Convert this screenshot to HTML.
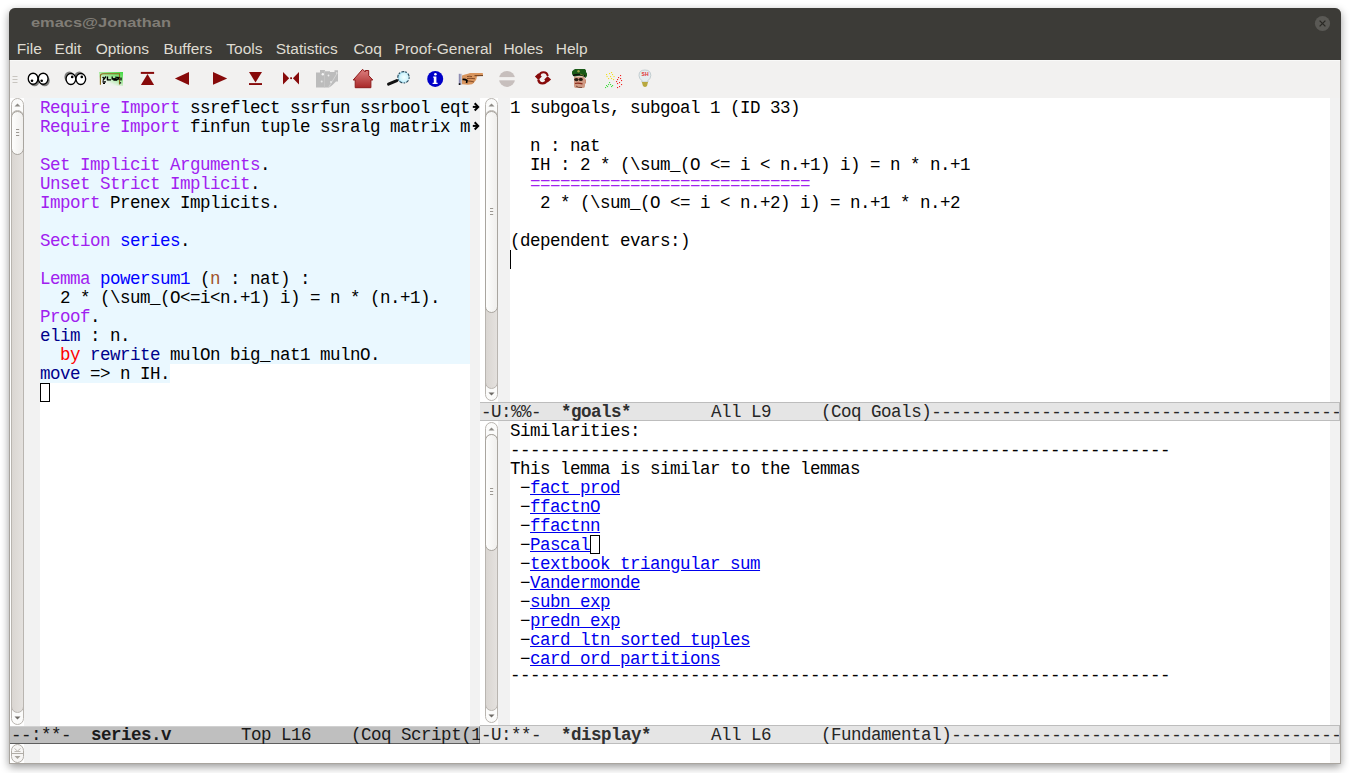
<!DOCTYPE html><html><head><meta charset="utf-8"><style>
*{margin:0;padding:0;box-sizing:border-box}
html,body{width:1350px;height:773px;overflow:hidden;background:#fff;position:relative}
.a{position:absolute}
.m{font-family:"Liberation Mono",monospace;font-size:17.5px;letter-spacing:-0.500px;line-height:19px;white-space:pre;color:#000}
.kw{color:#a020f0}
.fn{color:#0000ff}
.vr{color:#a0522d}
.tc{color:#00008b}
.rd{color:#ff0000}
.lk{color:#0000ee;text-decoration:underline;text-underline-offset:1px}
.b{font-weight:bold}
.dd{position:relative;top:1px}
.du .dd{top:-2px}
.sans{font-family:"Liberation Sans",sans-serif}
.sb{position:absolute;border:1px solid #aaa69f;border-radius:7px;background:linear-gradient(90deg,#dcd8d4,#e6e3e0)}
.th{position:absolute;border:1px solid #a9a59f;border-radius:7px;background:linear-gradient(90deg,#fdfdfc,#f0efed)}
</style></head><body><div class="a" style="left:9px;top:8px;width:1332px;height:756px;background:#a9a59f;border-radius:6px 6px 0 0;box-shadow:0 3px 9px rgba(0,0,0,.40)"></div>
<div class="a" style="left:9px;top:8px;width:1332px;height:52px;background:#3c3b37;border-radius:6px 6px 0 0"></div>
<div class="a sans b" style="left:31px;top:14px;font-size:13.5px;letter-spacing:0px;color:#807d76;line-height:18px;transform:scaleX(1.215);transform-origin:0 0">emacs@Jonathan</div>
<svg class="a" style="left:1314px;top:15px" width="17" height="17" viewBox="0 0 17 17"><circle cx="8.5" cy="8.5" r="7.6" fill="#5a5955"/><path d="M5.6 5.6L11.4 11.4M11.4 5.6L5.6 11.4" stroke="#2a2925" stroke-width="1.3"/></svg>
<div class="a sans" style="left:16.8px;top:40px;font-size:15.5px;color:#dfdbd2;line-height:18px">File</div>
<div class="a sans" style="left:54.6px;top:40px;font-size:15.5px;color:#dfdbd2;line-height:18px">Edit</div>
<div class="a sans" style="left:95.7px;top:40px;font-size:15.5px;color:#dfdbd2;line-height:18px">Options</div>
<div class="a sans" style="left:163.4px;top:40px;font-size:15.5px;color:#dfdbd2;line-height:18px">Buffers</div>
<div class="a sans" style="left:226.3px;top:40px;font-size:15.5px;color:#dfdbd2;line-height:18px">Tools</div>
<div class="a sans" style="left:275.7px;top:40px;font-size:15.5px;color:#dfdbd2;line-height:18px">Statistics</div>
<div class="a sans" style="left:353.4px;top:40px;font-size:15.5px;color:#dfdbd2;line-height:18px">Coq</div>
<div class="a sans" style="left:394.6px;top:40px;font-size:15.5px;color:#dfdbd2;line-height:18px">Proof-General</div>
<div class="a sans" style="left:503.4px;top:40px;font-size:15.5px;color:#dfdbd2;line-height:18px">Holes</div>
<div class="a sans" style="left:555.7px;top:40px;font-size:15.5px;color:#dfdbd2;line-height:18px">Help</div>
<div class="a" style="left:10px;top:60px;width:1330px;height:38px;background:#f2f1f0;border-top:1px solid #f9f9f8"></div>
<div class="a" style="left:10px;top:98px;width:1330px;height:665px;background:#fff"></div>
<svg class="a" style="left:12px;top:75px" width="6" height="9"><path d="M0.5 1.5h5M0.5 4.5h5M0.5 7.5h5" stroke="#c8c5c0" stroke-width="1"/></svg>
<svg class="a" style="left:26px;top:70px" width="26" height="20" viewBox="26 70 26 20">
<ellipse cx="34.6" cy="80.7" rx="5" ry="5.6" fill="#555" opacity=".75"/><ellipse cx="44.7" cy="80.7" rx="5" ry="5.6" fill="#555" opacity=".75"/>
<ellipse cx="33.1" cy="78.7" rx="4.85" ry="5.5" fill="#fff" stroke="#000" stroke-width="1.35"/><ellipse cx="43.2" cy="78.7" rx="4.85" ry="5.5" fill="#fff" stroke="#000" stroke-width="1.35"/>
<circle cx="32" cy="80.8" r="1.3"/><circle cx="41.7" cy="80.8" r="1.3"/></svg>
<svg class="a" style="left:62px;top:68px" width="26" height="20" viewBox="62 68 26 20">
<ellipse cx="69.4" cy="77" rx="5" ry="5.6" fill="#555" opacity=".75"/><ellipse cx="79.3" cy="77" rx="5" ry="5.6" fill="#555" opacity=".75"/>
<ellipse cx="70.9" cy="79" rx="4.85" ry="5.5" fill="#fff" stroke="#000" stroke-width="1.35"/><ellipse cx="80.8" cy="79" rx="4.85" ry="5.5" fill="#fff" stroke="#000" stroke-width="1.35"/>
<circle cx="72.2" cy="76.9" r="1.3"/><circle cx="81.8" cy="76.9" r="1.3"/></svg>
<svg class="a" style="left:99px;top:72px" width="24" height="14" viewBox="0 0 24 14">
<defs><linearGradient id="gg" x1="1" y1="0" x2="0.3" y2="1"><stop offset="0" stop-color="#3cd83c"/><stop offset=".45" stop-color="#a0e898"/><stop offset=".8" stop-color="#ecf2ea"/><stop offset="1" stop-color="#f2f2f0"/></linearGradient></defs>
<rect width="24" height="14" fill="url(#gg)"/><path d="M1.4 12.8V4Q1.4 1.8 4 1.8H20.5V12.5" fill="none" stroke="#8a6a1a" stroke-width="1.1"/>
<path d="M3.6 5l2.2 2.3M7 4.5L3.8 8.6M3.4 9.8H7M4 11.3H6M7.8 6.5L9.5 8.2M8.5 4.5V7.8H12M13.2 4.5V7H17V4.5M15 6V8.2H18M18 5l2.4 2.6M20.4 5L17.8 8M22 5.5V8.5M21.5 10.3V11.5" fill="none" stroke="#000" stroke-width="1.3"/></svg>
<svg class="a" style="left:140px;top:71px" width="15" height="15" viewBox="140 71 15 15"><rect x="140.8" y="71.9" width="13.3" height="2" fill="#870a0a"/><path d="M147.5 74.1L154.1 85H140.9Z" fill="#870a0a"/></svg>
<svg class="a" style="left:174px;top:71px" width="16" height="15" viewBox="174 71 16 15"><path d="M174.9 78.4L189 71.9V85Z" fill="#870a0a"/></svg>
<svg class="a" style="left:212px;top:71px" width="16" height="15" viewBox="212 71 16 15"><path d="M227.2 78.4L213 72.1V84.8Z" fill="#870a0a"/></svg>
<svg class="a" style="left:248px;top:71px" width="15" height="15" viewBox="248 71 15 15"><path d="M249 72.1H262L255.5 82.6Z" fill="#870a0a"/><rect x="249" y="83.1" width="13" height="1.9" fill="#870a0a"/></svg>
<svg class="a" style="left:282px;top:71px" width="18" height="15" viewBox="282 71 18 15"><path d="M283 72V84.6L289.2 78.3Z M299 72V84.6L292.9 78.3Z" fill="#870a0a"/><rect x="290.2" y="77.3" width="1.8" height="1.8" fill="#870a0a"/></svg>
<svg class="a" style="left:315px;top:69px" width="25" height="20" viewBox="315 69 25 20">
<path d="M316 72.5H320V70H325V71.2H330V72H334.5V70.3H338V81.5H336L333 84.5L331 86.3L329 87.6H316Z" fill="#bcbcbc"/>
<path d="M328.5 87.5L337 73.5" stroke="#d4d4d4" stroke-width="1"/><path d="M324.5 70.5V87.5" stroke="#c8c8c8" stroke-width=".8"/>
<circle cx="322.8" cy="74.3" r="1.2" fill="#f4f4f4"/><circle cx="328.5" cy="75.5" r="0.9" fill="#eee"/><circle cx="321.7" cy="81.5" r="1" fill="#e8e8e8"/><circle cx="331" cy="82" r="1" fill="#e8e8e8"/><circle cx="336.7" cy="73" r=".8" fill="#e8e8e8"/></svg>
<svg class="a" style="left:352px;top:68px" width="22" height="21" viewBox="352 68 22 21">
<defs><linearGradient id="hg" x1="0" y1="0" x2="0" y2="1"><stop offset="0" stop-color="#dd8080"/><stop offset="1" stop-color="#a82828"/></linearGradient></defs>
<path d="M353.2 80L362.6 69.3L365.3 72V70.5H368.7V75.6L372.8 80H370.9V87.7H355.2V80Z" fill="url(#hg)" stroke="#8e1c1c" stroke-width="1"/></svg>
<svg class="a" style="left:386px;top:69px" width="26" height="19" viewBox="386 69 26 19">
<defs><radialGradient id="lg" cx=".55" cy=".5" r=".6"><stop offset="0" stop-color="#f4ffff"/><stop offset=".6" stop-color="#d0f4fc"/><stop offset="1" stop-color="#7cc4e4"/></radialGradient></defs>
<path d="M388.5 84.2L396.8 80.6" stroke="#111" stroke-width="2.9" stroke-linecap="round"/>
<circle cx="403.5" cy="77.3" r="5.7" fill="url(#lg)" stroke="#2a4a5a" stroke-width="1.1" stroke-dasharray="1.6 1.4 3 1"/></svg>
<svg class="a" style="left:426px;top:70px" width="18" height="18" viewBox="426 70 18 18">
<circle cx="435.2" cy="78.9" r="8" fill="#0000c8"/><circle cx="435.4" cy="74.2" r="1.3" fill="#fff"/><path d="M433.2 76.6H436.4V82.8H437.6V84H432.6V82.8H433.8V77.8H433.2Z" fill="#fff"/></svg>
<svg class="a" style="left:458px;top:72px" width="27" height="14" viewBox="458 72 27 14">
<defs><linearGradient id="cf" x1="0" y1="0" x2="1" y2="0"><stop offset="0" stop-color="#7a78a8"/><stop offset="1" stop-color="#dadada"/></linearGradient></defs>
<rect x="458.8" y="73.8" width="3.4" height="11" fill="url(#cf)"/><rect x="458.8" y="83.3" width="1.6" height="1.6" fill="#000"/>
<path d="M462 75.5Q465 74.2 468 73.8L470 73.1H482.8L483 75.8L477 76.2Q476.5 79 476 80Q474 83 472 84.2L468 84.8L462 84.3Z" fill="#d8955e"/>
<path d="M474.5 75.7L483 75.6" stroke="#6a3a18" stroke-width="1"/>
<path d="M462.5 79.5Q465 79 467 80.5L466.5 83" stroke="#000" stroke-width="1.6" fill="none"/>
<path d="M467 78.5Q471 78 475 78.8M468 81Q471 81 474 82M467 76.5Q470 76 472 76.6" stroke="#7a4420" stroke-width=".9" fill="none"/></svg>
<svg class="a" style="left:498px;top:70px" width="18" height="18" viewBox="498 70 18 18">
<circle cx="507" cy="78.9" r="8" fill="#c7bfbd"/><rect x="498" y="77.1" width="18" height="3.2" fill="#f2f1f0"/></svg>
<svg class="a" style="left:533px;top:69px" width="20" height="17" viewBox="533 69 20 17">
<path d="M539.5 75.5Q540 72.3 543.5 72.3Q547 72.3 547.8 76" fill="none" stroke="#870a0a" stroke-width="2.0"/>
<path d="M546.6 80Q546 83.4 542.5 83.4Q539 83.4 538.3 79.5" fill="none" stroke="#870a0a" stroke-width="2.4"/>
<path d="M534.9 76.5L538.4 73.3L541.8 76.5L538.4 80Z M551.1 79.4L547.6 76.2L544.2 79.4L547.6 82.6Z" fill="#870a0a"/></svg>
<svg class="a" style="left:571px;top:68px" width="18" height="21" viewBox="571 68 18 21">
<path d="M574 76.5V86Q574 88 576 88H583Q585 88 585 86V80L584.5 76.5Z" fill="#d09a84"/>
<path d="M576 86Q578 88 582 87.5" stroke="#7a4a3a" stroke-width="1" fill="none"/>
<ellipse cx="576.4" cy="79.6" rx="2.2" ry="1.6" fill="#2a1a12"/><ellipse cx="580.8" cy="79.4" rx="2" ry="1.7" fill="#2a1a12"/>
<path d="M575 83.5Q578 82.6 582.5 83.8" stroke="#8a2a1a" stroke-width="1.2" fill="none"/>
<path d="M585 78.5L586 80V83L585 84" fill="#c88a70"/>
<path d="M572 73.5V71.5L573.5 70L575 69H585L586 70.5V72L587 73.5V76L585.5 78L584 76.5Q580 75 574.5 76.5L572.5 75Z" fill="#1b5a18"/>
<path d="M573 75.5Q579 73.3 585 76" stroke="#101010" stroke-width="1.4" fill="none"/>
<circle cx="578.5" cy="71.3" r="1.2" fill="#9aa048"/><path d="M580 74L584 75.5" stroke="#7a9a30" stroke-width=".8"/></svg>
<svg class="a" style="left:603px;top:70px" width="22" height="20" viewBox="603 70 22 20"><rect x="606" y="74" width="1.1" height="1.1" fill="#f0e020"/><rect x="606.5" y="76" width="1.1" height="1.1" fill="#f0e020"/><rect x="609" y="73" width="1.1" height="1.1" fill="#f0e020"/><rect x="611" y="72" width="1.1" height="1.1" fill="#f0e020"/><rect x="612" y="74" width="1.1" height="1.1" fill="#f0e020"/><rect x="610" y="76" width="1.1" height="1.1" fill="#f0e020"/><rect x="608" y="78" width="1.1" height="1.1" fill="#f0e020"/><rect x="611" y="78" width="1.1" height="1.1" fill="#f0e020"/><rect x="613" y="79" width="1.1" height="1.1" fill="#f0e020"/><rect x="613.5" y="76" width="1.1" height="1.1" fill="#f0e020"/><rect x="605" y="87" width="1.1" height="1.1" fill="#40e040"/><rect x="606" y="85" width="1.1" height="1.1" fill="#40e040"/><rect x="608" y="84" width="1.1" height="1.1" fill="#40e040"/><rect x="607" y="86" width="1.1" height="1.1" fill="#40e040"/><rect x="609" y="82" width="1.1" height="1.1" fill="#40e040"/><rect x="610" y="84" width="1.1" height="1.1" fill="#40e040"/><rect x="611" y="86" width="1.1" height="1.1" fill="#40e040"/><rect x="612" y="85" width="1.1" height="1.1" fill="#40e040"/><rect x="620" y="75" width="1.1" height="1.1" fill="#f02020"/><rect x="618" y="77" width="1.1" height="1.1" fill="#f02020"/><rect x="617" y="79" width="1.1" height="1.1" fill="#f02020"/><rect x="616" y="81" width="1.1" height="1.1" fill="#f02020"/><rect x="617" y="83" width="1.1" height="1.1" fill="#f02020"/><rect x="619" y="82" width="1.1" height="1.1" fill="#f02020"/><rect x="621" y="84" width="1.1" height="1.1" fill="#f02020"/><rect x="619" y="86" width="1.1" height="1.1" fill="#f02020"/><rect x="617" y="87" width="1.1" height="1.1" fill="#f02020"/><rect x="621" y="80" width="1.1" height="1.1" fill="#f02020"/><rect x="620" y="78" width="1.1" height="1.1" fill="#f02020"/></svg>
<svg class="a" style="left:638px;top:69px" width="14" height="20" viewBox="638 69 14 20">
<path d="M644.9 70Q650.8 70 650.8 75.5Q650.8 78.5 648 80.5V82H641.8V80.5Q639 78.5 639 75.5Q639 70 644.9 70Z" fill="#e4ecef" stroke="#b8c4c8" stroke-width=".8"/>
<path d="M641.8 82H648L647 86Q645 88 643 86Z" fill="#b8a840"/>
<text x="641.6" y="76.2" font-family="Liberation Sans" font-size="5" font-weight="bold" fill="#e03030">SH</text></svg>
<div class="a" style="left:24px;top:98px;width:16px;height:628px;background:#f2f2f2"></div>
<div class="a" style="left:470px;top:98px;width:10px;height:628px;background:#f2f2f2"></div>
<div class="a" style="left:11px;top:98px;width:13px;height:627px;border:1px solid #b9b5b0;border-radius:7px;background:#fbfbfa"></div><div class="a" style="left:11px;top:110px;width:13px;height:603px;border:1px solid #b9b5b0;border-radius:7px;background:linear-gradient(90deg,#dad6d2,#e4e1de)"></div><svg class="a" style="left:11px;top:98px" width="13" height="12"><path d="M3.5 8.5L6.5 5.5L9.5 8.5Z" fill="#8e8b86"/></svg><svg class="a" style="left:11px;top:713px" width="13" height="12"><path d="M3.5 3.5L6.5 6.5L9.5 3.5Z" fill="#6e6b66"/></svg><div class="th" style="left:11px;top:111px;width:13px;height:44px"></div><svg class="a" style="left:11px;top:129px" width="13" height="7"><path d="M5 0.5h3.2M5 3.5h3.2M5 6.5h3.2" stroke="#9c9892" stroke-width="1"/></svg>
<div class="a" style="left:498px;top:98px;width:12px;height:304px;background:#f2f2f2"></div>
<div class="a" style="left:1330px;top:98px;width:10px;height:304px;background:#f2f2f2"></div>
<div class="a" style="left:485px;top:98px;width:13px;height:303px;border:1px solid #b9b5b0;border-radius:7px;background:#fbfbfa"></div><div class="a" style="left:485px;top:110px;width:13px;height:279px;border:1px solid #b9b5b0;border-radius:7px;background:linear-gradient(90deg,#dad6d2,#e4e1de)"></div><svg class="a" style="left:485px;top:98px" width="13" height="12"><path d="M3.5 8.5L6.5 5.5L9.5 8.5Z" fill="#8e8b86"/></svg><svg class="a" style="left:485px;top:389px" width="13" height="12"><path d="M3.5 3.5L6.5 6.5L9.5 3.5Z" fill="#6e6b66"/></svg><div class="th" style="left:485px;top:111px;width:13px;height:202px"></div><svg class="a" style="left:485px;top:208px" width="13" height="7"><path d="M5 0.5h3.2M5 3.5h3.2M5 6.5h3.2" stroke="#9c9892" stroke-width="1"/></svg>
<div class="a" style="left:498px;top:421px;width:12px;height:304px;background:#f2f2f2"></div>
<div class="a" style="left:1330px;top:421px;width:10px;height:304px;background:#f2f2f2"></div>
<div class="a" style="left:485px;top:422px;width:13px;height:301px;border:1px solid #b9b5b0;border-radius:7px;background:#fbfbfa"></div><div class="a" style="left:485px;top:434px;width:13px;height:277px;border:1px solid #b9b5b0;border-radius:7px;background:linear-gradient(90deg,#dad6d2,#e4e1de)"></div><svg class="a" style="left:485px;top:422px" width="13" height="12"><path d="M3.5 8.5L6.5 5.5L9.5 8.5Z" fill="#8e8b86"/></svg><svg class="a" style="left:485px;top:711px" width="13" height="12"><path d="M3.5 3.5L6.5 6.5L9.5 3.5Z" fill="#6e6b66"/></svg><div class="th" style="left:485px;top:434px;width:13px;height:117px"></div><svg class="a" style="left:485px;top:488px" width="13" height="7"><path d="M5 0.5h3.2M5 3.5h3.2M5 6.5h3.2" stroke="#9c9892" stroke-width="1"/></svg>
<div class="a" style="left:24px;top:744px;width:16px;height:19px;background:#f2f2f2"></div>
<div class="a" style="left:1330px;top:744px;width:10px;height:19px;background:#f2f2f2"></div>
<svg class="a" style="left:11px;top:744px" width="13" height="19" viewBox="0 0 13 19">
<rect x=".5" y=".5" width="12" height="18" rx="6" fill="#f6f5f4" stroke="#b0aca6"/><path d="M1 9.5H12" stroke="#b0aca6"/>
<path d="M3.5 4.5L6.5 7L9.5 4.5M3.5 7.5H9.5" fill="none" stroke="#bdb9b3"/><path d="M3.5 12L6.5 15L9.5 12Z" fill="#a8a49e"/></svg>
<div class="a" style="left:40px;top:98px;width:430px;height:266px;background:#eaf8ff"></div>
<div class="a" style="left:40px;top:364px;width:130px;height:19px;background:#eaf8ff"></div>
<div class="a m" style="left:40px;top:99px;"><span class="kw">Require Import</span> ssreflect ssrfun ssrbool eqt</div>
<div class="a m" style="left:40px;top:118px;"><span class="kw">Require Import</span> finfun tuple ssralg matrix m</div>
<div class="a m" style="left:40px;top:137px;"></div>
<div class="a m" style="left:40px;top:156px;"><span class="kw">Set Implicit Arguments</span>.</div>
<div class="a m" style="left:40px;top:175px;"><span class="kw">Unset Strict Implicit</span>.</div>
<div class="a m" style="left:40px;top:194px;"><span class="kw">Import</span> Prenex Implicits.</div>
<div class="a m" style="left:40px;top:213px;"></div>
<div class="a m" style="left:40px;top:232px;"><span class="kw">Section</span> <span class="fn">series</span>.</div>
<div class="a m" style="left:40px;top:251px;"></div>
<div class="a m" style="left:40px;top:270px;"><span class="kw">Lemma</span> <span class="fn">powersum1</span> (<span class="vr">n</span> : nat) :</div>
<div class="a m" style="left:40px;top:289px;">  2 * (\sum_(O&lt;=i&lt;n.+1) i) = n * (n.+1).</div>
<div class="a m" style="left:40px;top:308px;"><span class="kw">Proof</span>.</div>
<div class="a m" style="left:40px;top:327px;"><span class="tc">elim</span> : n.</div>
<div class="a m" style="left:40px;top:346px;">  <span class="rd">by</span> <span class="tc">rewrite</span> mulOn big_nat1 mulnO.</div>
<div class="a m" style="left:40px;top:365px;"><span class="tc">move</span> =&gt; n IH.</div>
<svg class="a" style="left:471px;top:98px" width="9" height="19" viewBox="0 0 9 19"><path d="M1.8 8.9H6.5" stroke="#000" stroke-width="2"/><path d="M3.7 5.3L7.2 8.9L3.7 12.5" fill="none" stroke="#000" stroke-width="2"/></svg>
<svg class="a" style="left:471px;top:117px" width="9" height="19" viewBox="0 0 9 19"><path d="M1.8 8.9H6.5" stroke="#000" stroke-width="2"/><path d="M3.7 5.3L7.2 8.9L3.7 12.5" fill="none" stroke="#000" stroke-width="2"/></svg>
<div class="a" style="left:40px;top:383px;width:10px;height:19px;border:1.5px solid #000"></div>
<div class="a m" style="left:510px;top:99px;">1 subgoals, subgoal 1 (ID 33)</div>
<div class="a m" style="left:510px;top:118px;"></div>
<div class="a m" style="left:510px;top:137px;">  n : nat</div>
<div class="a m" style="left:510px;top:156px;">  IH : 2 * (\sum_(O &lt;= i &lt; n.+1) i) = n * n.+1</div>
<div class="a m" style="left:510px;top:175px;">  <span class="kw">============================</span></div>
<div class="a m" style="left:510px;top:194px;">   2 * (\sum_(O &lt;= i &lt; n.+2) i) = n.+1 * n.+2</div>
<div class="a m" style="left:510px;top:213px;"></div>
<div class="a m" style="left:510px;top:232px;">(dependent evars:)</div>
<div class="a" style="left:510px;top:250px;width:1px;height:19px;background:#000"></div>
<div class="a m" style="left:510px;top:422px;">Similarities:</div>
<div class="a m" style="left:510px;top:441px;"><span class="dd">------------------------------------------------------------------</span></div>
<div class="a m" style="left:510px;top:460px;">This lemma is similar to the lemmas</div>
<div class="a m" style="left:510px;top:479px;"> −<span class="lk">fact prod</span></div>
<div class="a m" style="left:510px;top:498px;"> −<span class="lk">ffactnO</span></div>
<div class="a m" style="left:510px;top:517px;"> −<span class="lk">ffactnn</span></div>
<div class="a m" style="left:510px;top:536px;"> −<span class="lk">Pascal</span></div>
<div class="a m" style="left:510px;top:555px;"> −<span class="lk">textbook triangular sum</span></div>
<div class="a m" style="left:510px;top:574px;"> −<span class="lk">Vandermonde</span></div>
<div class="a m" style="left:510px;top:593px;"> −<span class="lk">subn exp</span></div>
<div class="a m" style="left:510px;top:612px;"> −<span class="lk">predn exp</span></div>
<div class="a m" style="left:510px;top:631px;"> −<span class="lk">card ltn sorted tuples</span></div>
<div class="a m" style="left:510px;top:650px;"> −<span class="lk">card ord partitions</span></div>
<div class="a m" style="left:510px;top:669px;"><span class="du"><span class="dd">------------------------------------------------------------------</span></span></div>
<div class="a" style="left:590px;top:535px;width:10px;height:19px;border:1.5px solid #000"></div>
<div class="a" style="left:10px;top:726px;width:470px;height:18px;background:#bfbfbf;border-bottom:1px solid #5e5e5e;border-right:1px solid #7a7a7a;border-top:1px solid #d0d0d0"></div>
<div class="a" style="left:480px;top:402px;width:860px;height:19px;background:#e5e5e5;border-top:1px solid #bdbdbd;border-bottom:1px solid #bdbdbd;border-right:1px solid #bdbdbd"></div>
<div class="a" style="left:480px;top:725px;width:860px;height:19px;background:#e5e5e5;border-top:1px solid #bdbdbd;border-bottom:1px solid #bdbdbd;border-right:1px solid #bdbdbd"></div>
<div class="a" style="left:10px;top:726px;width:470px;height:18px;overflow:hidden"><div class="a m" style="left:1px;top:0px;color:#1a1a1a"><span class="dd">--</span>:**<span class="dd">-</span>  <span class="b">series.v</span>       Top L16    (Coq Script(1</div></div>
<div class="a" style="left:480px;top:402px;width:859px;height:19px;overflow:hidden"><div class="a m" style="left:1px;top:1px;color:#262626"><span class="dd">-</span>U:%%<span class="dd">-</span>  <span class="b" style="color:#303030">*goals*</span>        All L9     (Coq Goals)<span class="dd">------------------------------------------------------------------------------------------</span></div></div>
<div class="a" style="left:480px;top:725px;width:859px;height:19px;overflow:hidden"><div class="a m" style="left:1px;top:1px;color:#262626"><span class="dd">-</span>U:**<span class="dd">-</span>  <span class="b" style="color:#303030">*display*</span>      All L6     (Fundamental)<span class="dd">------------------------------------------------------------------------------------------</span></div></div></body></html>
